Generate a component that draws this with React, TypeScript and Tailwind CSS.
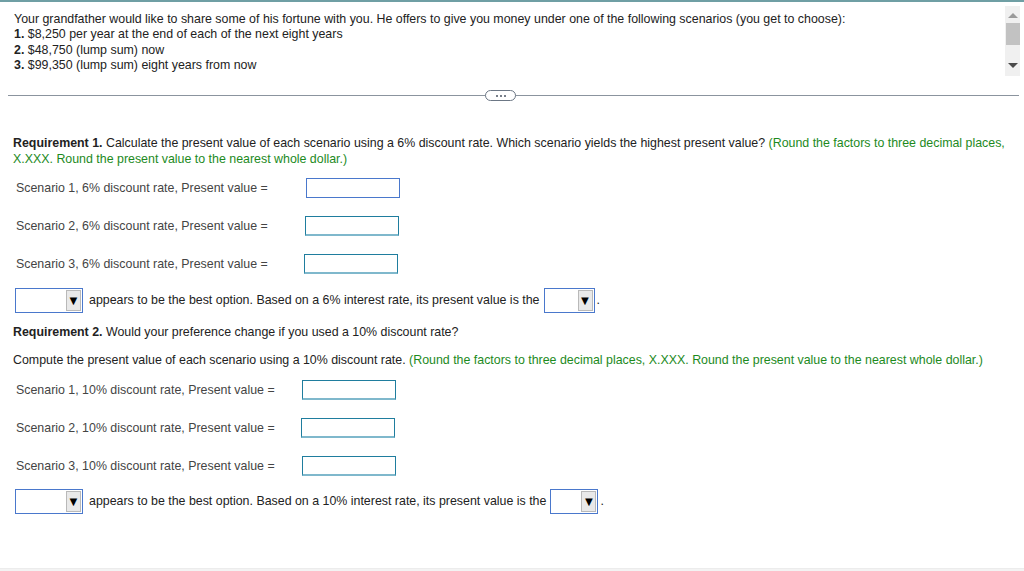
import React from "react";

const green = "text-[#1d8a1d]";

const InputBox: React.FC<{ first?: boolean; w?: string }> = ({ first, w = "w-[94px]" }) => (
  <div
    className={`${w} h-[20px] border ${
      first ? "border-[#4a78cc]" : "border-[#1f7d9e] border-b-[#7fb8cc] border-b-2"
    } bg-white`}
  />
);

const Dropdown: React.FC<{ w: string }> = ({ w }) => (
  <div className={`${w} h-[25px] border border-[#4a78cc] bg-white flex justify-end items-center pr-[1px]`}>
    <div className="w-[15px] h-[21px] bg-[#e9e9e9] border border-[#b9b9b9] flex items-center justify-center text-[13px] leading-none text-black">
      ▼
    </div>
  </div>
);

const ScenarioRow: React.FC<{ label: string; first?: boolean; labelW: string }> = ({
  label,
  first,
  labelW,
}) => (
  <div className="flex items-center h-[20px]">
    <span className={`${labelW} pl-[16px] text-[#444]`}>{label}</span>
    <InputBox first={first} />
  </div>
);

const BestRow: React.FC<{ rate: string; w2: string }> = ({ rate, w2 }) => (
  <div className="flex items-center pl-[15px] text-[#222]">
    <Dropdown w="w-[68px]" />
    <span className="ml-[6px] mr-[4px]">
      appears to be the best option. Based on a {rate} interest rate, its present value is the
    </span>
    <Dropdown w={w2} />
    <span className="ml-[2px]">.</span>
  </div>
);

export default function App() {
  return (
    <div
      className="w-[1024px] h-[571px] bg-white text-[12.4px] leading-[15px] overflow-hidden flex flex-col"
      style={{ fontFamily: '"Liberation Sans", Arial, sans-serif' }}
    >
      <div className="h-[2px] bg-[#6f9fa4]" />

      {/* question pane */}
      <div className="flex justify-between h-[78px]">
        <div className="pl-[14px] pt-[10px] text-[#222] leading-[15.4px]">
          <p>
            Your grandfather would like to share some of his fortune with you. He offers to give you money
            under one of the following scenarios (you get to choose):
          </p>
          <p>
            <b>1.</b> $8,250 per year at the end of each of the next eight years
          </p>
          <p>
            <b>2.</b> $48,750 (lump sum) now
          </p>
          <p>
            <b>3.</b> $99,350 (lump sum) eight years from now
          </p>
        </div>
        <div className="mt-[4px] mr-[4px] w-[15px] h-[70px] bg-[#f0f0f0] flex flex-col items-center">
          <div className="mt-[7px] w-0 h-0 border-l-[5px] border-r-[5px] border-b-[5px] border-l-transparent border-r-transparent border-b-[#9a9a9a]" />
          <div className="mt-[5px] w-[14px] h-[22px] bg-[#c2c2c2]" />
          <div className="mt-auto mb-[8px] w-0 h-0 border-l-[5px] border-r-[5px] border-t-[5px] border-l-transparent border-r-transparent border-t-[#4a4a4a]" />
        </div>
      </div>

      {/* divider */}
      <div className="relative mx-[8px] mr-[5px] mt-[15px] h-px bg-[#8b949e]">
        <div className="absolute left-[477px] -top-[5px] w-[31px] h-[11px] rounded-full border border-[#6c7785] bg-white flex items-center justify-center gap-[2px]">
          <span className="w-[2px] h-[2px] rounded-full bg-[#4b5563]" />
          <span className="w-[2px] h-[2px] rounded-full bg-[#4b5563]" />
          <span className="w-[2px] h-[2px] rounded-full bg-[#4b5563]" />
        </div>
      </div>

      {/* requirement 1 */}
      <div className="pl-[13px] pr-[10px] mt-[39px] text-[#222] leading-[16px]">
        <b>Requirement 1.</b> Calculate the present value of each scenario using a 6% discount rate. Which
        scenario yields the highest present value?{" "}
        <span className={green}>
          (Round the factors to three decimal places, X.XXX. Round the present value to the nearest whole
          dollar.)
        </span>
      </div>

      <div className="flex flex-col gap-[18px] mt-[11px]">
        <ScenarioRow label="Scenario 1, 6% discount rate, Present value =" first labelW="w-[306px]" />
        <ScenarioRow label="Scenario 2, 6% discount rate, Present value =" labelW="w-[305px]" />
        <ScenarioRow label="Scenario 3, 6% discount rate, Present value =" labelW="w-[304px]" />
      </div>

      <div className="mt-[14px]">
        <BestRow rate="6%" w2="w-[51px]" />
      </div>

      <div className="pl-[13px] mt-[12px] text-[#222]">
        <b>Requirement 2.</b> Would your preference change if you used a 10% discount rate?
      </div>

      <div className="pl-[13px] mt-[13px] text-[#222]">
        Compute the present value of each scenario using a 10% discount rate.{" "}
        <span className={green}>
          (Round the factors to three decimal places, X.XXX. Round the present value to the nearest whole
          dollar.)
        </span>
      </div>

      <div className="flex flex-col gap-[18px] mt-[12px]">
        <ScenarioRow label="Scenario 1, 10% discount rate, Present value =" labelW="w-[302px]" />
        <ScenarioRow label="Scenario 2, 10% discount rate, Present value =" labelW="w-[301px]" />
        <ScenarioRow label="Scenario 3, 10% discount rate, Present value =" labelW="w-[302px]" />
      </div>

      <div className="mt-[13px]">
        <BestRow rate="10%" w2="w-[48px]" />
      </div>

      <div className="mt-auto h-[3px] bg-[#f3f3f3] border-t border-[#ececec]" />
    </div>
  );
}
